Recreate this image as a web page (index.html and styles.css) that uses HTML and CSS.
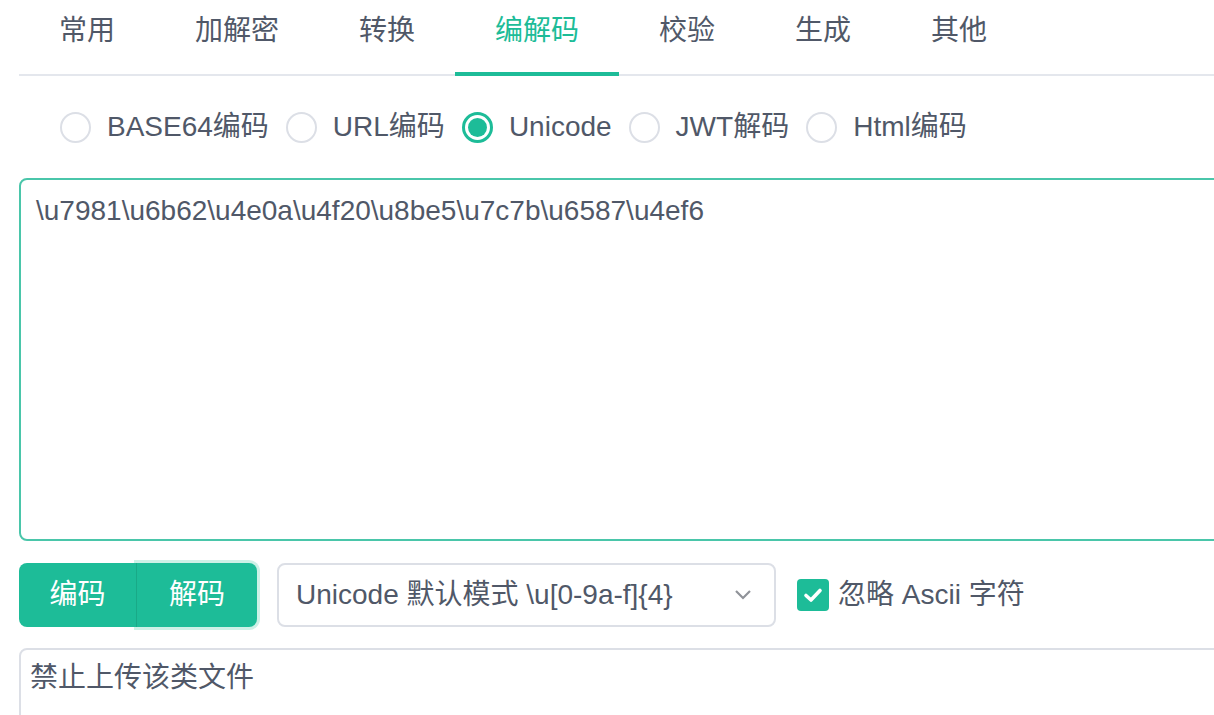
FILE: index.html
```html
<!DOCTYPE html>
<html lang="zh-CN">
<head>
<meta charset="utf-8">
<title>编解码</title>
<link rel="stylesheet" href="styles.css">
</head>
<body>
<div class="page">
  <div class="tabs">
    <div class="tab first">常用</div>
    <div class="tab">加解密</div>
    <div class="tab">转换</div>
    <div class="tab active">编解码</div>
    <div class="tab">校验</div>
    <div class="tab">生成</div>
    <div class="tab">其他</div>
  </div>

  <div class="radios">
    <label class="radio"><span class="radio-circle"></span><span class="radio-label">BASE64编码</span></label>
    <label class="radio"><span class="radio-circle"></span><span class="radio-label">URL编码</span></label>
    <label class="radio"><span class="radio-circle checked"></span><span class="radio-label">Unicode</span></label>
    <label class="radio"><span class="radio-circle"></span><span class="radio-label">JWT解码</span></label>
    <label class="radio"><span class="radio-circle"></span><span class="radio-label">Html编码</span></label>
  </div>

  <textarea class="input-area" readonly>\u7981\u6b62\u4e0a\u4f20\u8be5\u7c7b\u6587\u4ef6</textarea>

  <div class="actions">
    <div class="btn-group">
      <button class="btn btn-left">编码</button>
      <button class="btn btn-right">解码</button>
    </div>
    <div class="select">
      <span class="select-text">Unicode 默认模式 \u[0-9a-f]{4}</span>
      <svg class="chevron" width="18" height="12" viewBox="0 0 18 12"><path d="M2 2 L9 9 L16 2" fill="none" stroke="#909399" stroke-width="2.2"/></svg>
    </div>
    <label class="checkbox">
      <span class="check-box"><svg width="20" height="16" viewBox="0 0 20 16"><path d="M3 8.5 L8 13 L17 3.5" fill="none" stroke="#fff" stroke-width="3.6" stroke-linecap="round" stroke-linejoin="round"/></svg></span>
      <span class="check-label">忽略 Ascii 字符</span>
    </label>
  </div>

  <div class="output-area">禁止上传该类文件</div>
</div>
</body>
</html>
```

FILE: styles.css
```css
html, body {
  margin: 0;
  padding: 0;
  background: #ffffff;
  overflow: hidden;
}

body {
  font-family: "Liberation Sans", Arial, "Noto Sans CJK SC", sans-serif;
  color: #505868;
}

.page {
  box-sizing: border-box;
  width: 1214px;
  height: 715px;
  overflow: hidden;
  padding-left: 19px;
}

/* Tabs */
.tabs {
  display: flex;
  width: 1240px;
  border-bottom: 2px solid #e4e7ed;
}

.tab {
  position: relative;
  height: 74px;
  line-height: 62px;
  padding: 0 40px;
  font-size: 28px;
  color: #505868;
  white-space: nowrap;
}

.tab.first {
  padding-left: 40px;
}

.tab.active {
  color: #1dbc98;
}

.tab.active::after {
  content: "";
  position: absolute;
  left: 0;
  right: 0;
  bottom: -2px;
  height: 4px;
  background: #1dbc98;
}

/* Radios */
.radios {
  display: flex;
  align-items: center;
  height: 42px;
  margin-top: 30px;
  padding-left: 41px;
}

.radio {
  display: flex;
  align-items: center;
  margin-right: 17px;
}

.radio-circle {
  box-sizing: border-box;
  width: 31px;
  height: 31px;
  border: 2px solid #dcdfe6;
  border-radius: 50%;
  background: #fff;
  position: relative;
}

.radio-circle.checked {
  border: 3px solid #1dbc98;
}

.radio-circle.checked::after {
  content: "";
  position: absolute;
  left: 50%;
  top: 50%;
  width: 19px;
  height: 19px;
  margin: -9.5px 0 0 -9.5px;
  border-radius: 50%;
  background: #1dbc98;
}

.radio-label {
  margin-left: 16px;
  font-size: 28px;
  line-height: 42px;
  color: #505868;
  white-space: nowrap;
}

/* Textarea */
.input-area {
  display: block;
  box-sizing: border-box;
  margin: 30px 0 0 0;
  width: 1240px;
  height: 363px;
  padding: 10px 15px;
  border: 2px solid #4ac6aa;
  border-radius: 8px;
  outline: none;
  resize: none;
  font-family: "Liberation Sans", Arial, "Noto Sans CJK SC", sans-serif;
  font-size: 28px;
  line-height: 42px;
  color: #505868;
  background: #fff;
}

/* Actions row */
.actions {
  display: flex;
  align-items: center;
  margin-top: 22px;
  height: 64px;
}

.btn-group {
  display: flex;
}

.btn {
  box-sizing: border-box;
  height: 64px;
  padding: 0;
  border: none;
  background: #1dbc98;
  color: #ffffff;
  font-family: "Liberation Sans", Arial, "Noto Sans CJK SC", sans-serif;
  font-size: 28px;
  line-height: 62px;
  text-align: center;
  white-space: nowrap;
  cursor: pointer;
}

.btn-left {
  position: relative;
  z-index: 1;
  width: 118px;
  border-radius: 8px 0 0 8px;
  border-right: 1px solid #19a987;
}

.btn-right {
  width: 120px;
  border-radius: 0 8px 8px 0;
  box-shadow: 0 0 0 3px #cdf1e7;
}

.select {
  box-sizing: border-box;
  display: flex;
  align-items: center;
  justify-content: space-between;
  width: 499px;
  height: 64px;
  margin-left: 20px;
  padding: 0 22px 0 17px;
  border: 2px solid #dcdfe6;
  border-radius: 8px;
  background: #fff;
}

.select-text {
  font-size: 28px;
  line-height: 58px;
  color: #505868;
  white-space: nowrap;
}

.chevron {
  display: block;
}

.checkbox {
  display: flex;
  align-items: center;
  margin-left: 21px;
}

.check-box {
  box-sizing: border-box;
  display: flex;
  align-items: center;
  justify-content: center;
  width: 32px;
  height: 32px;
  border-radius: 4px;
  background: #1dbc98;
}

.check-label {
  margin-left: 9px;
  font-size: 28px;
  line-height: 60px;
  color: #505868;
  white-space: nowrap;
}

/* Output area */
.output-area {
  box-sizing: border-box;
  margin-top: 21px;
  width: 1240px;
  height: 120px;
  padding: 0 9px;
  border: 2px solid #dcdfe6;
  border-radius: 8px;
  font-size: 28px;
  line-height: 56px;
  color: #505868;
}
```
